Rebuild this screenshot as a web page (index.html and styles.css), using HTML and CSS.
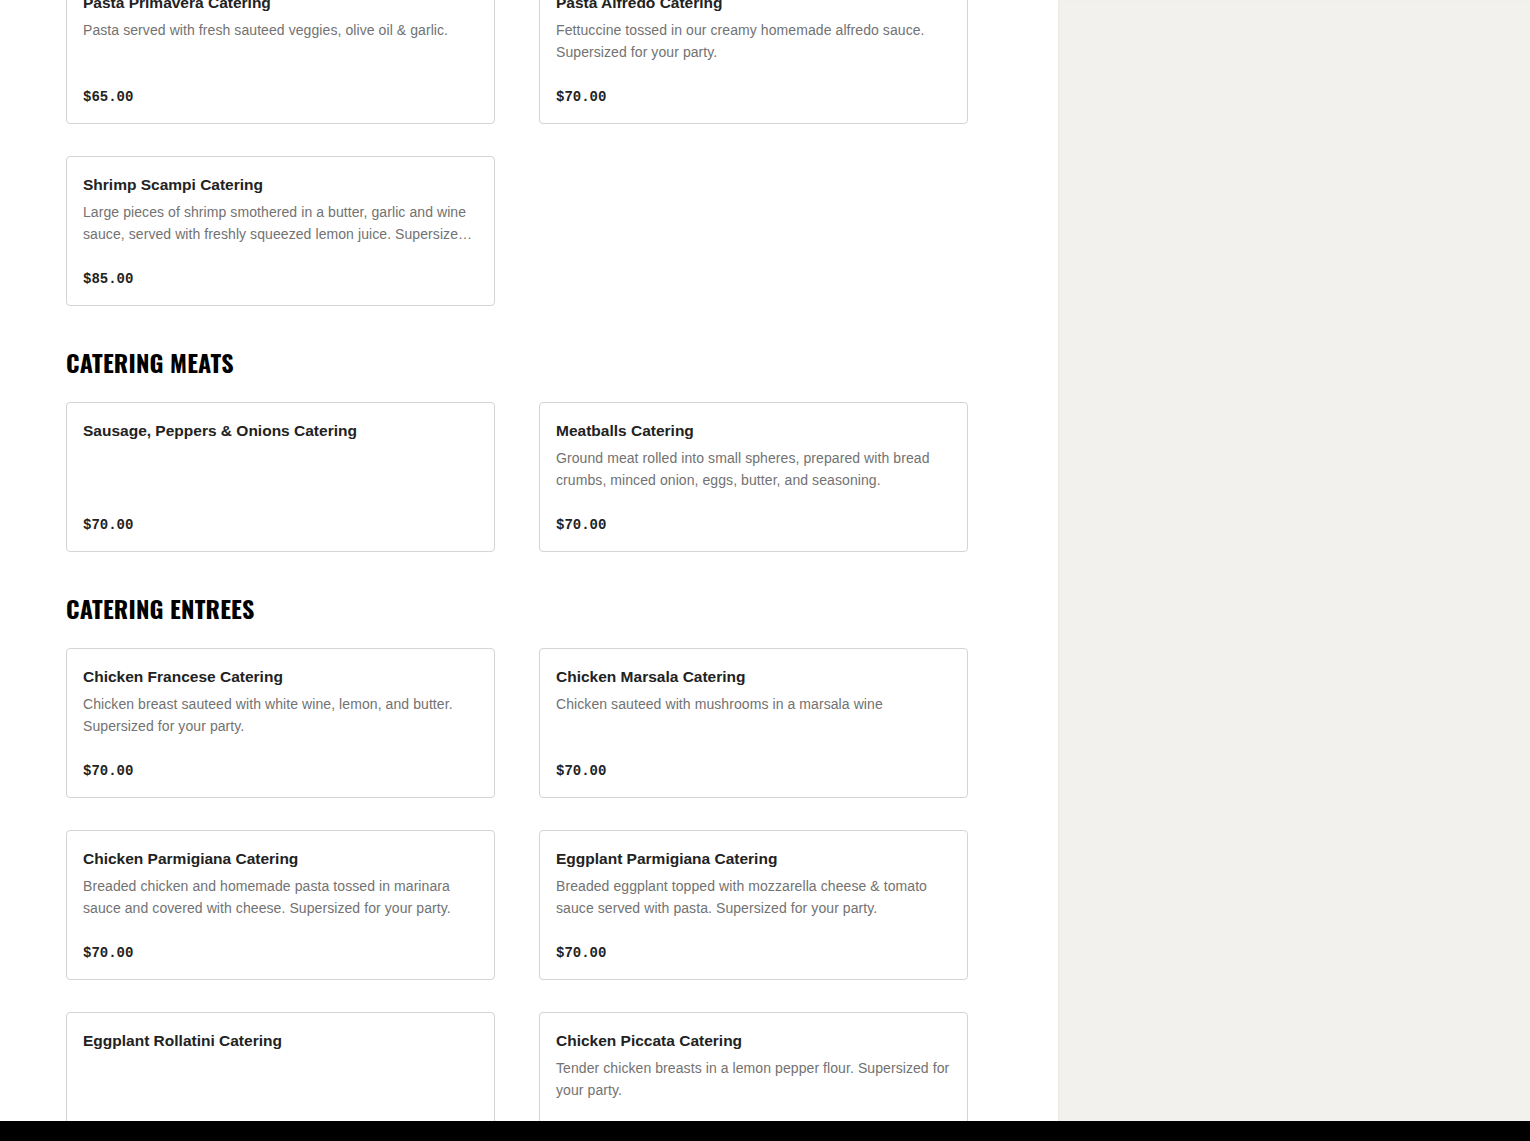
FILE: index.html
```html
<!DOCTYPE html>
<html lang="en">
<head>
    <meta charset="UTF-8">
    <meta name="viewport" content="width=device-width, initial-scale=1.0">
    <title>Catering Menu</title>
    <link rel="stylesheet" href="styles.css">
</head>
<body>

    <div class="page">
        <main class="menu">
            <section class="menu-section first">
                <div class="item-grid">
                    <div class="item-card">
                        <h3 class="item-name">Pasta Primavera Catering</h3>
                        <p class="item-desc">Pasta served with fresh sauteed veggies, olive oil &amp; garlic.</p>
                        <p class="item-price">$65.00</p>
                    </div>
                    <div class="item-card">
                        <h3 class="item-name">Pasta Alfredo Catering</h3>
                        <p class="item-desc">Fettuccine tossed in our creamy homemade alfredo sauce. Supersized for your party.</p>
                        <p class="item-price">$70.00</p>
                    </div>
                    <div class="item-card">
                        <h3 class="item-name">Shrimp Scampi Catering</h3>
                        <p class="item-desc">Large pieces of shrimp smothered in a butter, garlic and wine sauce, served with freshly squeezed lemon juice. Supersized for your party.</p>
                        <p class="item-price">$85.00</p>
                    </div>
                </div>
            </section>

            <section class="menu-section">
                <h2 class="section-title">CATERING MEATS</h2>
                <div class="item-grid">
                    <div class="item-card">
                        <h3 class="item-name">Sausage, Peppers &amp; Onions Catering</h3>
                        <p class="item-desc"></p>
                        <p class="item-price">$70.00</p>
                    </div>
                    <div class="item-card">
                        <h3 class="item-name">Meatballs Catering</h3>
                        <p class="item-desc">Ground meat rolled into small spheres, prepared with bread crumbs, minced onion, eggs, butter, and seasoning.</p>
                        <p class="item-price">$70.00</p>
                    </div>
                </div>
            </section>

            <section class="menu-section">
                <h2 class="section-title">CATERING ENTREES</h2>
                <div class="item-grid">
                    <div class="item-card">
                        <h3 class="item-name">Chicken Francese Catering</h3>
                        <p class="item-desc">Chicken breast sauteed with white wine, lemon, and butter. Supersized for your party.</p>
                        <p class="item-price">$70.00</p>
                    </div>
                    <div class="item-card">
                        <h3 class="item-name">Chicken Marsala Catering</h3>
                        <p class="item-desc">Chicken sauteed with mushrooms in a marsala wine</p>
                        <p class="item-price">$70.00</p>
                    </div>
                    <div class="item-card">
                        <h3 class="item-name">Chicken Parmigiana Catering</h3>
                        <p class="item-desc">Breaded chicken and homemade pasta tossed in marinara sauce and covered with cheese. Supersized for your party.</p>
                        <p class="item-price">$70.00</p>
                    </div>
                    <div class="item-card">
                        <h3 class="item-name">Eggplant Parmigiana Catering</h3>
                        <p class="item-desc">Breaded eggplant topped with mozzarella cheese &amp; tomato sauce served with pasta. Supersized for your party.</p>
                        <p class="item-price">$70.00</p>
                    </div>
                    <div class="item-card">
                        <h3 class="item-name">Eggplant Rollatini Catering</h3>
                        <p class="item-desc"></p>
                        <p class="item-price">$70.00</p>
                    </div>
                    <div class="item-card">
                        <h3 class="item-name">Chicken Piccata Catering</h3>
                        <p class="item-desc">Tender chicken breasts in a lemon pepper flour. Supersized for your party.</p>
                        <p class="item-price">$70.00</p>
                    </div>
                </div>
            </section>
        </main>

        <aside class="sidebar"></aside>
    </div>

    <div class="bottom-bar"></div>

</body>
</html>
```

FILE: styles.css
```css
body {
    font-family: "Liberation Sans", Arial, sans-serif;
    margin: 0;
    padding: 0;
    background-color: #fff;
    color: #222;
}
.page {
    display: flex;
    height: 100vh;
    overflow: hidden;
}
.menu {
    width: 1058px;
    flex-shrink: 0;
    box-sizing: border-box;
    padding: 0 90px 0 66px;
    background-color: #fff;
}
.sidebar {
    flex: 1;
    background-color: #f2f1ed;
    box-shadow: inset 1px 0 2px rgba(0, 0, 0, 0.04);
}
.menu-section {
    margin-bottom: 42px;
}
.menu-section.first {
    margin-top: -26px;
}
.section-title {
    font-family: Oswald, "Liberation Sans Narrow", "DejaVu Sans Condensed", sans-serif;
    font-weight: 700;
    font-size: 24px;
    line-height: 30px;
    margin: -1px 0 25px 0;
    color: #000;
    letter-spacing: 0.2px;
}
.item-grid {
    display: grid;
    grid-template-columns: 429px 429px;
    column-gap: 44px;
    row-gap: 32px;
}
.item-card {
    border: 1px solid #d4d4d4;
    border-radius: 4px;
    padding: 16px 16px 15px 16px;
    background-color: #fff;
}
.item-name {
    margin: 0;
    font-size: 15.5px;
    line-height: 24px;
    font-weight: 700;
    color: #222;
}
.item-desc {
    margin: 4px 0 0 0;
    font-size: 14px;
    line-height: 22px;
    height: 44px;
    letter-spacing: 0.08px;
    color: #727272;
    overflow: hidden;
    display: -webkit-box;
    -webkit-line-clamp: 2;
    -webkit-box-orient: vertical;
}
.item-price {
    margin: 23px 0 0 0;
    font-family: "Liberation Mono", "DejaVu Sans Mono", monospace;
    font-weight: 700;
    font-size: 14px;
    line-height: 22px;
    color: #222;
}
.bottom-bar {
    position: fixed;
    left: 0;
    right: 0;
    bottom: 0;
    height: 20px;
    background-color: #000;
}
```
